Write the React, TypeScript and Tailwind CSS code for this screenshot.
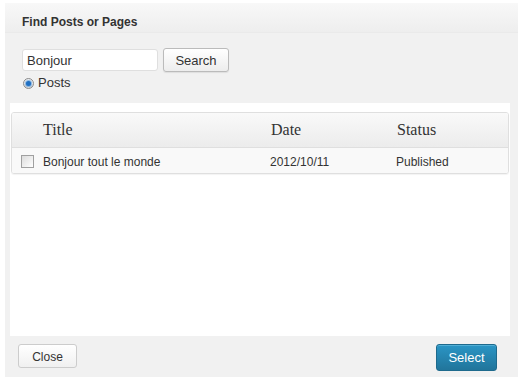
const rows = [{ title: "Bonjour tout le monde", date: "2012/10/11", status: "Published" }];

const App = () => {
    return (
        <div className="w-[518px] h-[382px] bg-white pt-[3px] pl-[5px] font-['Liberation_Sans',Arial,sans-serif] text-[#333]">
            <div className="w-[513px] h-[374px] bg-[#f1f1f1] flex flex-col">
                {/* title bar */}
                <div className="h-[30px] pt-[11px] pl-[17px] bg-gradient-to-b from-[#f8f8f8] to-[#eeeeee] border-b border-[#eaeaea]">
                    <h1 className="text-[12px] leading-[16px] font-bold text-[#333]">Find Posts or Pages</h1>
                </div>

                {/* search form */}
                <div className="pt-[15px] pl-[17px]">
                    <div className="flex items-center gap-[5px]">
                        <input
                            defaultValue="Bonjour"
                            className="w-[136px] h-[22px] bg-white border border-[#dfdfdf] rounded-[3px] px-[4px] pt-[1px] text-[13px] text-[#333] outline-none"
                        />
                        <button className="w-[66px] h-[24px] pt-[1px] rounded-[3px] border border-[#bbbbbb] bg-gradient-to-b from-white to-[#ededed] text-[13px] text-[#333] shadow-[0_1px_1px_rgba(0,0,0,0.08)]">
                            Search
                        </button>
                    </div>
                    <label className="flex items-center h-[16px] mt-[3px] pl-[1px] gap-[4px] text-[13px]">
                        <span className="w-[11px] h-[11px] rounded-full border border-[#8a8a8a] bg-gradient-to-b from-[#f4f4f4] to-[#d8d8d8] flex items-center justify-center">
                            <span className="w-[5px] h-[5px] rounded-full bg-[#1f6fc2] shadow-[0_0_1px_1px_rgba(60,140,220,0.6)]" />
                        </span>
                        Posts
                    </label>
                </div>

                {/* results */}
                <div className="mt-[12px] ml-[5px] w-[500px] h-[233px] bg-white pt-[9px] px-[1px]">
                    <div className="border border-[#dfdfdf] rounded-[3px] shadow-[0_1px_1px_rgba(0,0,0,0.05)] overflow-hidden">
                        <div className="grid grid-cols-[31px_228px_126px_1fr] h-[35px] items-center bg-gradient-to-b from-[#f9f9f9] to-[#ececec] border-b border-[#dfdfdf] font-['Liberation_Serif',Georgia,serif] text-[16px] text-[#333]">
                            <span />
                            <span>Title</span>
                            <span>Date</span>
                            <span>Status</span>
                        </div>
                        {rows.map((row, index) => (
                            <div
                                key={index}
                                className="grid grid-cols-[31px_227px_126px_1fr] h-[25px] pt-[2px] items-center bg-[#f9f9f9] text-[12px] text-[#333]"
                            >
                                <span className="pl-[9px]">
                                    <span className="block w-[13px] h-[13px] border border-[#a0a0a0] bg-gradient-to-br from-[#dcdcdc] to-white" />
                                </span>
                                <span>{row.title}</span>
                                <span>{row.date}</span>
                                <span>{row.status}</span>
                            </div>
                        ))}
                    </div>
                </div>

                {/* footer */}
                <div className="flex items-start justify-between pt-[8px] pl-[13px] pr-[21px]">
                    <button className="w-[59px] h-[24px] pt-[1px] rounded-[3px] border border-[#cccccc] bg-gradient-to-b from-white to-[#f0f0f0] text-[12px] text-[#333]">
                        Close
                    </button>
                    <button className="w-[61px] h-[27px] rounded-[3px] border border-[#1e6a8d] bg-gradient-to-b from-[#2a95c5] to-[#21759b] text-[13px] text-white shadow-[inset_0_1px_0_rgba(120,200,230,0.5)]">
                        Select
                    </button>
                </div>
            </div>
        </div>
    );
};

export default App;
